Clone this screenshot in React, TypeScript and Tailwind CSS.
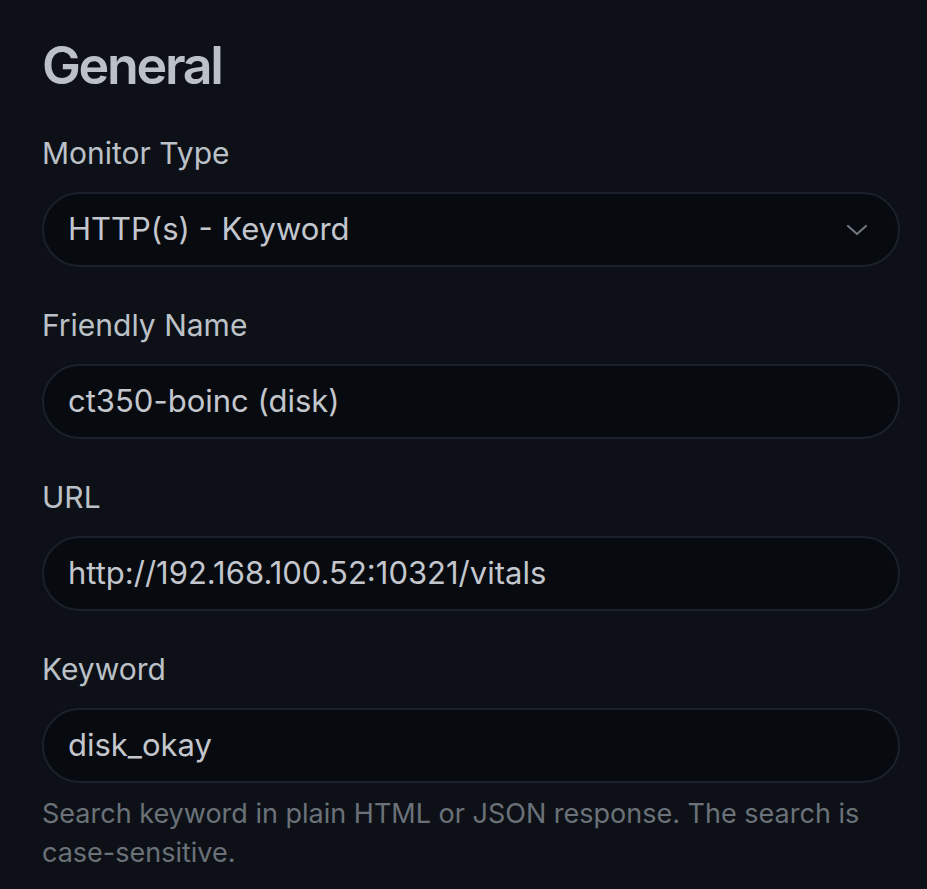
import React from 'react';

const font = { fontFamily: 'Inter, "Noto Sans", sans-serif' };

function Field({ label, value, select }: { label: string; value: string; select?: boolean }) {
  return (
    <div className="flex flex-col">
      <label className="text-[30px] leading-[45px] text-[#bcc1c8]">{label}</label>
      <div className="mt-4 flex h-[75px] items-center justify-between rounded-full border-2 border-[#1b212b] bg-[#070a0f] pl-[24px] pr-[26px]">
        <span className="text-[31px] text-[#c3c7cd]">{value}</span>
        {select && (
          <svg width="22" height="12" viewBox="0 0 22 12" fill="none" className="mr-[4px]">
            <path d="M2 2l9 8 9-8" stroke="#6f757e" strokeWidth="2.2" strokeLinecap="round" strokeLinejoin="round" />
          </svg>
        )}
      </div>
    </div>
  );
}

export default function App() {
  return (
    <div className="min-h-[889px] w-[927px] bg-[#0d1117] pl-[42px] pr-[27px] pt-[35px]" style={font}>
      <h2 className="text-[52px] font-semibold leading-[62px] tracking-[-0.045em] text-[#bcc1c8]">General</h2>
      <div className="mt-[34px] flex flex-col gap-[36px]">
        <Field label="Monitor Type" value="HTTP(s) - Keyword" select />
        <Field label="Friendly Name" value="ct350-boinc (disk)" />
        <Field label="URL" value="http://192.168.100.52:10321/vitals" />
        <div>
          <Field label="Keyword" value="disk_okay" />
          <p className="mt-[11px] text-[27px] leading-[39px] text-[#6b7179]">
            Search keyword in plain HTML or JSON response. The search is case-sensitive.
          </p>
        </div>
      </div>
    </div>
  );
}
